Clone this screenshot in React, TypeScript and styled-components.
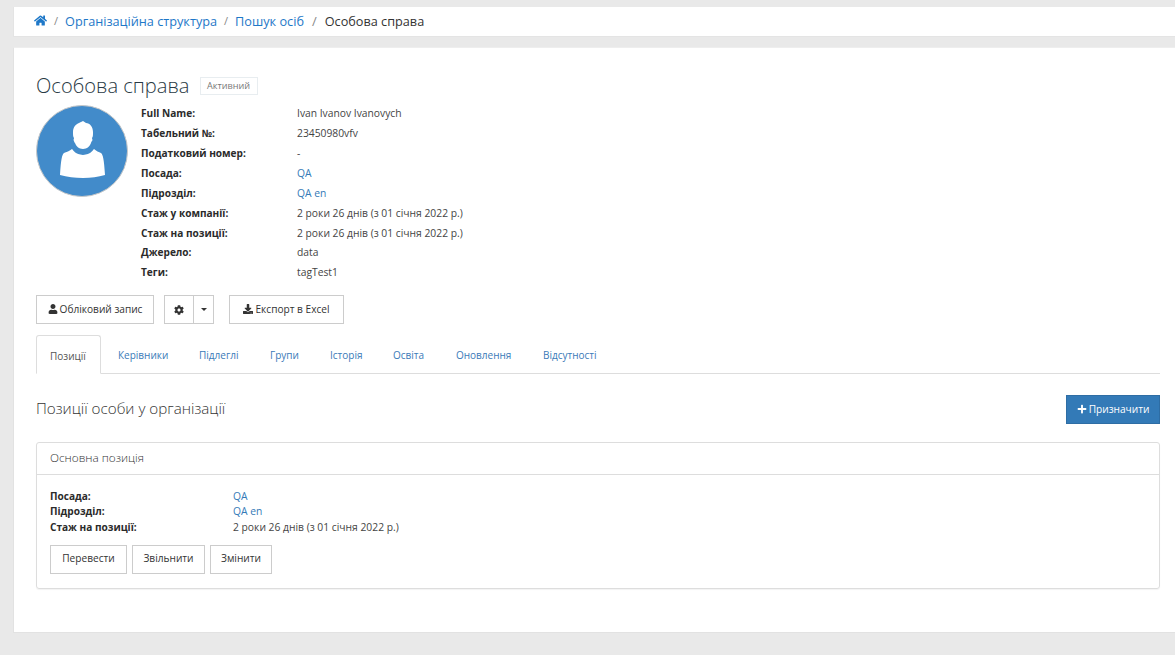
import React from "react";
import styled, { createGlobalStyle } from "styled-components";
import { FaHome, FaUser, FaCog, FaDownload, FaPlus } from "react-icons/fa";

const Global = createGlobalStyle`
  html, body { margin: 0; padding: 0; height: 100%; background: #e9e9e9; overflow: hidden; }
  body { font-family: "Open Sans", "Noto Sans", sans-serif; font-size: 10.1px; color: #333; }
  * { box-sizing: border-box; }
`;

const Page = styled.div`
  padding: 7px 0 0 13px;
  width: 1175px;
  height: 655px;
  display: flex;
  flex-direction: column;
  gap: 10px;
`;
const Breadcrumb = styled.nav`
  height: 30px;
  background: #fff;
  border: 1px solid #e4e4e4;
  border-width: 0 0 1px 1px;
  padding: 0 0 2px 20px;
  display: flex;
  align-items: center;
  font-size: 12.7px;
  color: #333;
`;
const Crumb = styled.a`
  color: #1e78c8;
  display: flex;
  align-items: center;
`;
const Sep = styled.span<{ $wide?: boolean }>`
  color: #888;
  margin: 0 ${(p) => (p.$wide ? 8 : 7)}px;
  font-size: ${(p) => (p.$wide ? 13 : 11)}px;
`;
const Card = styled.main`
  height: 586px;
  background: #fff;
  border: 1px solid #e2e2e2;
  border-right: 0;
  border-top-color: #eee;
  padding: 25px 15px 0 22px;
`;
const TitleRow = styled.div`
  display: flex;
  align-items: center;
  height: 26px;
  gap: 10px;
`;
const Title = styled.h1`
  margin: 0;
  font-size: 20.1px;
  line-height: 26px;
  font-weight: 300;
  color: #2a3a45;
`;
const Badge = styled.span`
  border: 1px solid #e8edf0;
  height: 18px;
  width: 58px;
  text-align: center;
  font-size: 9.1px;
  line-height: 16px;
  color: #777;
`;
const Profile = styled.section`
  display: flex;
  margin-top: 6px;
  height: 182px;
`;
const Avatar = styled.svg`
  width: 92px;
  height: 92px;
  flex: none;
`;
const Info = styled.div`
  margin-left: 13px;
  display: grid;
  grid-template-columns: 156px 1fr;
  grid-auto-rows: 19.9px;
  align-items: center;
  margin-top: -1.7px;
  align-self: flex-start;
`;
const Label = styled.div`
  font-weight: 700;
  color: #2b2b2b;
  font-size: 10.1px;
`;
const Value = styled.div`
  color: #444;
  font-size: 10.3px;
`;
const LinkValue = styled(Value)`
  color: #337ab7;
`;
const Actions = styled.div`
  display: flex;
  margin-top: 8px;
  height: 29px;
`;
const Btn = styled.button<{ $gap?: number; $w?: number }>`
  height: 29px;
  width: ${(p) => (p.$w ? `${p.$w}px` : "auto")};
  border: 1px solid #ccc;
  background: #fff;
  color: #333;
  padding: 0 0 2px;
  font: inherit;
  font-size: 10.15px;
  display: inline-flex;
  align-items: center;
  justify-content: center;
  gap: 2px;
  margin-left: ${(p) => p.$gap ?? 0}px;
  svg { width: 10px; height: 10px; }
`;
const GearBtn = styled(Btn)`
  width: 30px;
  padding: 0;
`;
const CaretBtn = styled(Btn)`
  width: 21px;
  padding: 0;
  margin-left: -1px;
`;
const Caret = styled.i`
  width: 0;
  height: 0;
  border-left: 3.5px solid transparent;
  border-right: 3.5px solid transparent;
  border-top: 3.5px solid #333;
`;
const Tabs = styled.div`
  display: flex;
  margin-top: 11px;
  height: 39px;
  border-bottom: 1px solid #ddd;
`;
const Tab = styled.a<{ $active?: boolean; $w: number }>`
  width: ${(p) => p.$w}px;
  height: ${(p) => (p.$active ? 39 : 38)}px;
  padding: 13px 0 0 ${(p) => (p.$active ? 13 : 17)}px;
  font-size: 10px;
  line-height: 15px;
  color: ${(p) => (p.$active ? "#555" : "#3a7ab8")};
  background: #fff;
  white-space: nowrap;
  ${(p) => p.$active && "border: 1px solid #ddd; border-bottom-color: #fff; border-radius: 3px 3px 0 0;"}
`;
const SectionHead = styled.div`
  display: flex;
  justify-content: space-between;
  align-items: center;
  margin-top: 21px;
  height: 29px;
`;
const SectionTitle = styled.h3`
  margin: 0 0 4px;
  font-size: 15.2px;
  font-weight: 300;
  color: #333;
`;
const PrimaryBtn = styled(Btn)`
  background: #337ab7;
  border-color: #2e6da4;
  color: #fff;
  width: 94px;
`;
const Panel = styled.section`
  margin-top: 18px;
  height: 147px;
  border: 1px solid #ddd;
  border-radius: 3px;
  box-shadow: 0 1px 1px rgba(0, 0, 0, 0.05);
`;
const PanelHead = styled.div`
  height: 32px;
  border-bottom: 1px solid #ddd;
  padding: 0 13px 3px;
  display: flex;
  align-items: center;
  font-size: 11.75px;
  font-weight: 300;
  color: #333;
`;
const PanelBody = styled.div`
  padding: 13px 13px 0;
`;
const PosGrid = styled.div`
  display: grid;
  grid-template-columns: 183px 1fr;
  grid-auto-rows: 15.5px;
  align-items: center;
`;
const PanelActions = styled.div`
  display: flex;
  gap: 5px;
  margin-top: 10px;
`;

const rows: [string, string, boolean?][] = [
  ["Full Name:", "Ivan Ivanov Ivanovych"],
  ["Табельний №:", "23450980vfv"],
  ["Податковий номер:", "-"],
  ["Посада:", "QA", true],
  ["Підрозділ:", "QA en", true],
  ["Стаж у компанії:", "2 роки 26 днів (з 01 січня 2022 р.)"],
  ["Стаж на позиції:", "2 роки 26 днів (з 01 січня 2022 р.)"],
  ["Джерело:", "data"],
  ["Теги:", "tagTest1"],
];
const tabs: [string, number][] = [
  ["Керівники", 81],
  ["Підлеглі", 71],
  ["Групи", 60],
  ["Історія", 63],
  ["Освіта", 63],
  ["Оновлення", 87],
  ["Відсутності", 90],
];
const pos: [string, string, boolean?][] = [
  ["Посада:", "QA", true],
  ["Підрозділ:", "QA en", true],
  ["Стаж на позиції:", "2 роки 26 днів (з 01 січня 2022 р.)"],
];

export default function App() {
  return (
    <Page>
      <Global />
      <Breadcrumb>
        <Crumb><FaHome size={13} /></Crumb>
        <Sep>/</Sep>
        <Crumb>Організаційна структура</Crumb>
        <Sep>/</Sep>
        <Crumb>Пошук осіб</Crumb>
        <Sep $wide>/</Sep>
        <span>Особова справа</span>
      </Breadcrumb>
      <Card>
        <TitleRow>
          <Title>Особова справа</Title>
          <Badge>Активний</Badge>
        </TitleRow>
        <Profile>
          <Avatar viewBox="0 0 92 92">
            <circle cx="46" cy="46" r="45.5" fill="#428bca" stroke="#c8c8c8" strokeWidth="1" />
            <path fill="#fff" d="M47 16c1 1 2 1 3 2 4 0 7 4 7 9 0 3 0 5-1 6 0 1 1 2 0 3-1 1-1 2-1 2-1 3-4 6-8 6s-7-3-8-6c0 0-1-1-1-2-1-1 0-2 0-3-1-1-1-3-1-6 0-5 3-8 6-9 1-1 3-1 4-2z" />
            <path fill="#fff" d="M36 44c2 2 3 5 11 6 8-1 9-4 11-6 2 2 5 3 7 4 2 2 3 6 4 22-7 2-14 3-22 3s-16-1-23-3c1-16 2-20 4-22 2-1 6-2 8-4z" />
          </Avatar>
          <Info>
            {rows.map(([l, v, link]) => (
              <React.Fragment key={l}>
                <Label>{l}</Label>
                {link ? <LinkValue>{v}</LinkValue> : <Value>{v}</Value>}
              </React.Fragment>
            ))}
          </Info>
        </Profile>
        <Actions>
          <Btn $w={118}><FaUser />Обліковий запис</Btn>
          <GearBtn $gap={10}><FaCog /></GearBtn>
          <CaretBtn><Caret /></CaretBtn>
          <Btn $gap={15} $w={115}><FaDownload />Експорт в Excel</Btn>
        </Actions>
        <Tabs>
          <Tab $active $w={65}>Позиції</Tab>
          {tabs.map(([t, w]) => <Tab key={t} $w={w}>{t}</Tab>)}
        </Tabs>
        <SectionHead>
          <SectionTitle>Позиції особи у організації</SectionTitle>
          <PrimaryBtn><FaPlus />Призначити</PrimaryBtn>
        </SectionHead>
        <Panel>
          <PanelHead>Основна позиція</PanelHead>
          <PanelBody>
            <PosGrid>
              {pos.map(([l, v, link]) => (
                <React.Fragment key={l}>
                  <Label>{l}</Label>
                  {link ? <LinkValue>{v}</LinkValue> : <Value>{v}</Value>}
                </React.Fragment>
              ))}
            </PosGrid>
            <PanelActions>
              <Btn $w={77}>Перевести</Btn>
              <Btn $w={73}>Звільнити</Btn>
              <Btn $w={62}>Змінити</Btn>
            </PanelActions>
          </PanelBody>
        </Panel>
      </Card>
    </Page>
  );
}
